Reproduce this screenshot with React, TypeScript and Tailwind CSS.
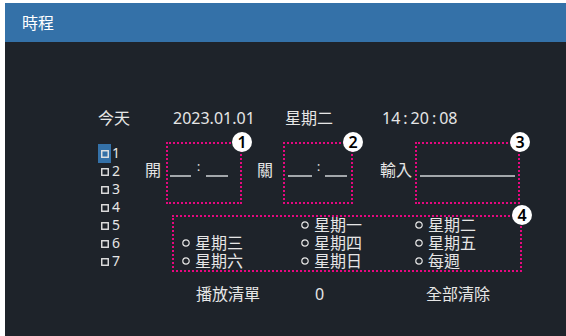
import React from "react";

const FONT = { fontFamily: '"Noto Sans", "Noto Sans CJK TC", sans-serif' };

function Square() {
  return (
    <svg width="8" height="8" viewBox="0 0 8 8" className="shrink-0">
      <rect x="0.75" y="0.75" width="6.5" height="6.5" fill="none" stroke="#e4e4e4" strokeWidth="1.4" />
    </svg>
  );
}

function Ring() {
  return (
    <svg width="8" height="8" viewBox="0 0 8 8" className="shrink-0">
      <circle cx="4" cy="4" r="3.2" fill="none" stroke="#e4e4e4" strokeWidth="1.2" />
    </svg>
  );
}

function Badge({ n }: { n: string }) {
  return (
    <div className="absolute -right-[12px] -top-[12px] w-[20px] h-[20px] rounded-full bg-white flex items-center justify-center text-black text-[16px] font-semibold leading-none">
      {n}
    </div>
  );
}

function Line({ w }: { w: string }) {
  return <div className={`h-[2px] bg-[#a3a7ab] ${w}`} />;
}

function Colon({ w }: { w: string }) {
  return (
    <div className={`${w} self-start flex justify-center text-[12px] leading-[8px] text-[#e4e4e4]`}>:</div>
  );
}

function Option({ label }: { label: string }) {
  return (
    <div className="flex items-center h-[18px] gap-[5px]">
      <Ring />
      <span className="leading-[18px]">{label}</span>
    </div>
  );
}

export default function App() {
  return (
    <div className="w-[566px] h-[336px] bg-white pl-[5px] pt-[3px] overflow-hidden" style={FONT}>
      <div className="flex flex-col w-full h-full">
        <div className="h-[39px] bg-[#3471a8] flex items-center pl-[17px] text-white text-[16px] leading-[22px]">
          時程
        </div>
        <div className="flex-1 bg-[#1e232a] text-[#e6e6e6] pl-[93px]">
          <div className="flex mt-[65px] text-[16px] leading-[22px]">
            <span className="w-[75px]">今天</span>
            <span className="w-[112px]">2023.01.01</span>
            <span className="w-[97px]">星期二</span>
            <span className="flex">
              14<span className="mx-[3px]">:</span>20<span className="mx-[3px]">:</span>08
            </span>
          </div>

          <div className="flex mt-[13px]">
            <div className="w-[47px] pt-[2px] flex flex-col text-[14px] leading-[18px]">
              <div className="flex items-center h-[18px]">
                <span className="h-[19px] w-[13px] bg-[#3471a8] flex items-center justify-center pt-[2px]">
                  <Square />
                </span>
                <span className="ml-[1px]">1</span>
              </div>
              {["2", "3", "4", "5", "6", "7"].map((d) => (
                <div key={d} className="flex items-center h-[18px] pl-[3px]">
                  <span className="pt-[2px]"><Square /></span>
                  <span className="ml-[3px]">{d}</span>
                </div>
              ))}
            </div>

            <div className="flex flex-col">
              <div className="flex items-start text-[16px] leading-[22px]">
                <span className="mt-[17px] w-[16px]">開</span>
                <div className="relative ml-[5px] w-[76px] h-[62px] border-2 border-dotted border-[#e5087f]">
                  <div className="flex items-end h-[14px] mt-[19px] pl-[2px]">
                    <Line w="w-[21px]" />
                    <Colon w="w-[15px]" />
                    <Line w="w-[22px]" />
                  </div>
                  <Badge n="1" />
                </div>
                <span className="mt-[17px] ml-[15px] w-[16px]">關</span>
                <div className="relative ml-[10px] w-[70px] h-[62px] border-2 border-dotted border-[#e5087f]">
                  <div className="flex items-end h-[14px] mt-[19px] pl-[3px]">
                    <Line w="w-[24px]" />
                    <Colon w="w-[13px]" />
                    <Line w="w-[22px]" />
                  </div>
                  <Badge n="2" />
                </div>
                <span className="mt-[17px] ml-[27px] w-[32px]">輸入</span>
                <div className="relative ml-[3px] w-[105px] h-[62px] border-2 border-dotted border-[#e5087f]">
                  <div className="flex items-end h-[14px] mt-[19px] pl-[3px]">
                    <Line w="w-[95px]" />
                  </div>
                  <Badge n="3" />
                </div>
              </div>

              <div className="relative ml-[27px] mt-[11px] w-[350px] h-[57px] border-2 border-dotted border-[#e5087f] pl-[8px] text-[16px] leading-[18px]">
                <div className="grid grid-cols-[119px_114px_1fr] -mt-[1px]">
                  <div className="h-[18px]" />
                  <Option label="星期一" />
                  <Option label="星期二" />
                  <Option label="星期三" />
                  <Option label="星期四" />
                  <Option label="星期五" />
                  <Option label="星期六" />
                  <Option label="星期日" />
                  <Option label="每週" />
                </div>
                <Badge n="4" />
              </div>
            </div>
          </div>

          <div className="flex mt-[11px] pl-[98px] text-[16px] leading-[22px]">
            <span className="w-[119px]">播放清單</span>
            <span className="w-[111px]">0</span>
            <span>全部清除</span>
          </div>
        </div>
      </div>
    </div>
  );
}
